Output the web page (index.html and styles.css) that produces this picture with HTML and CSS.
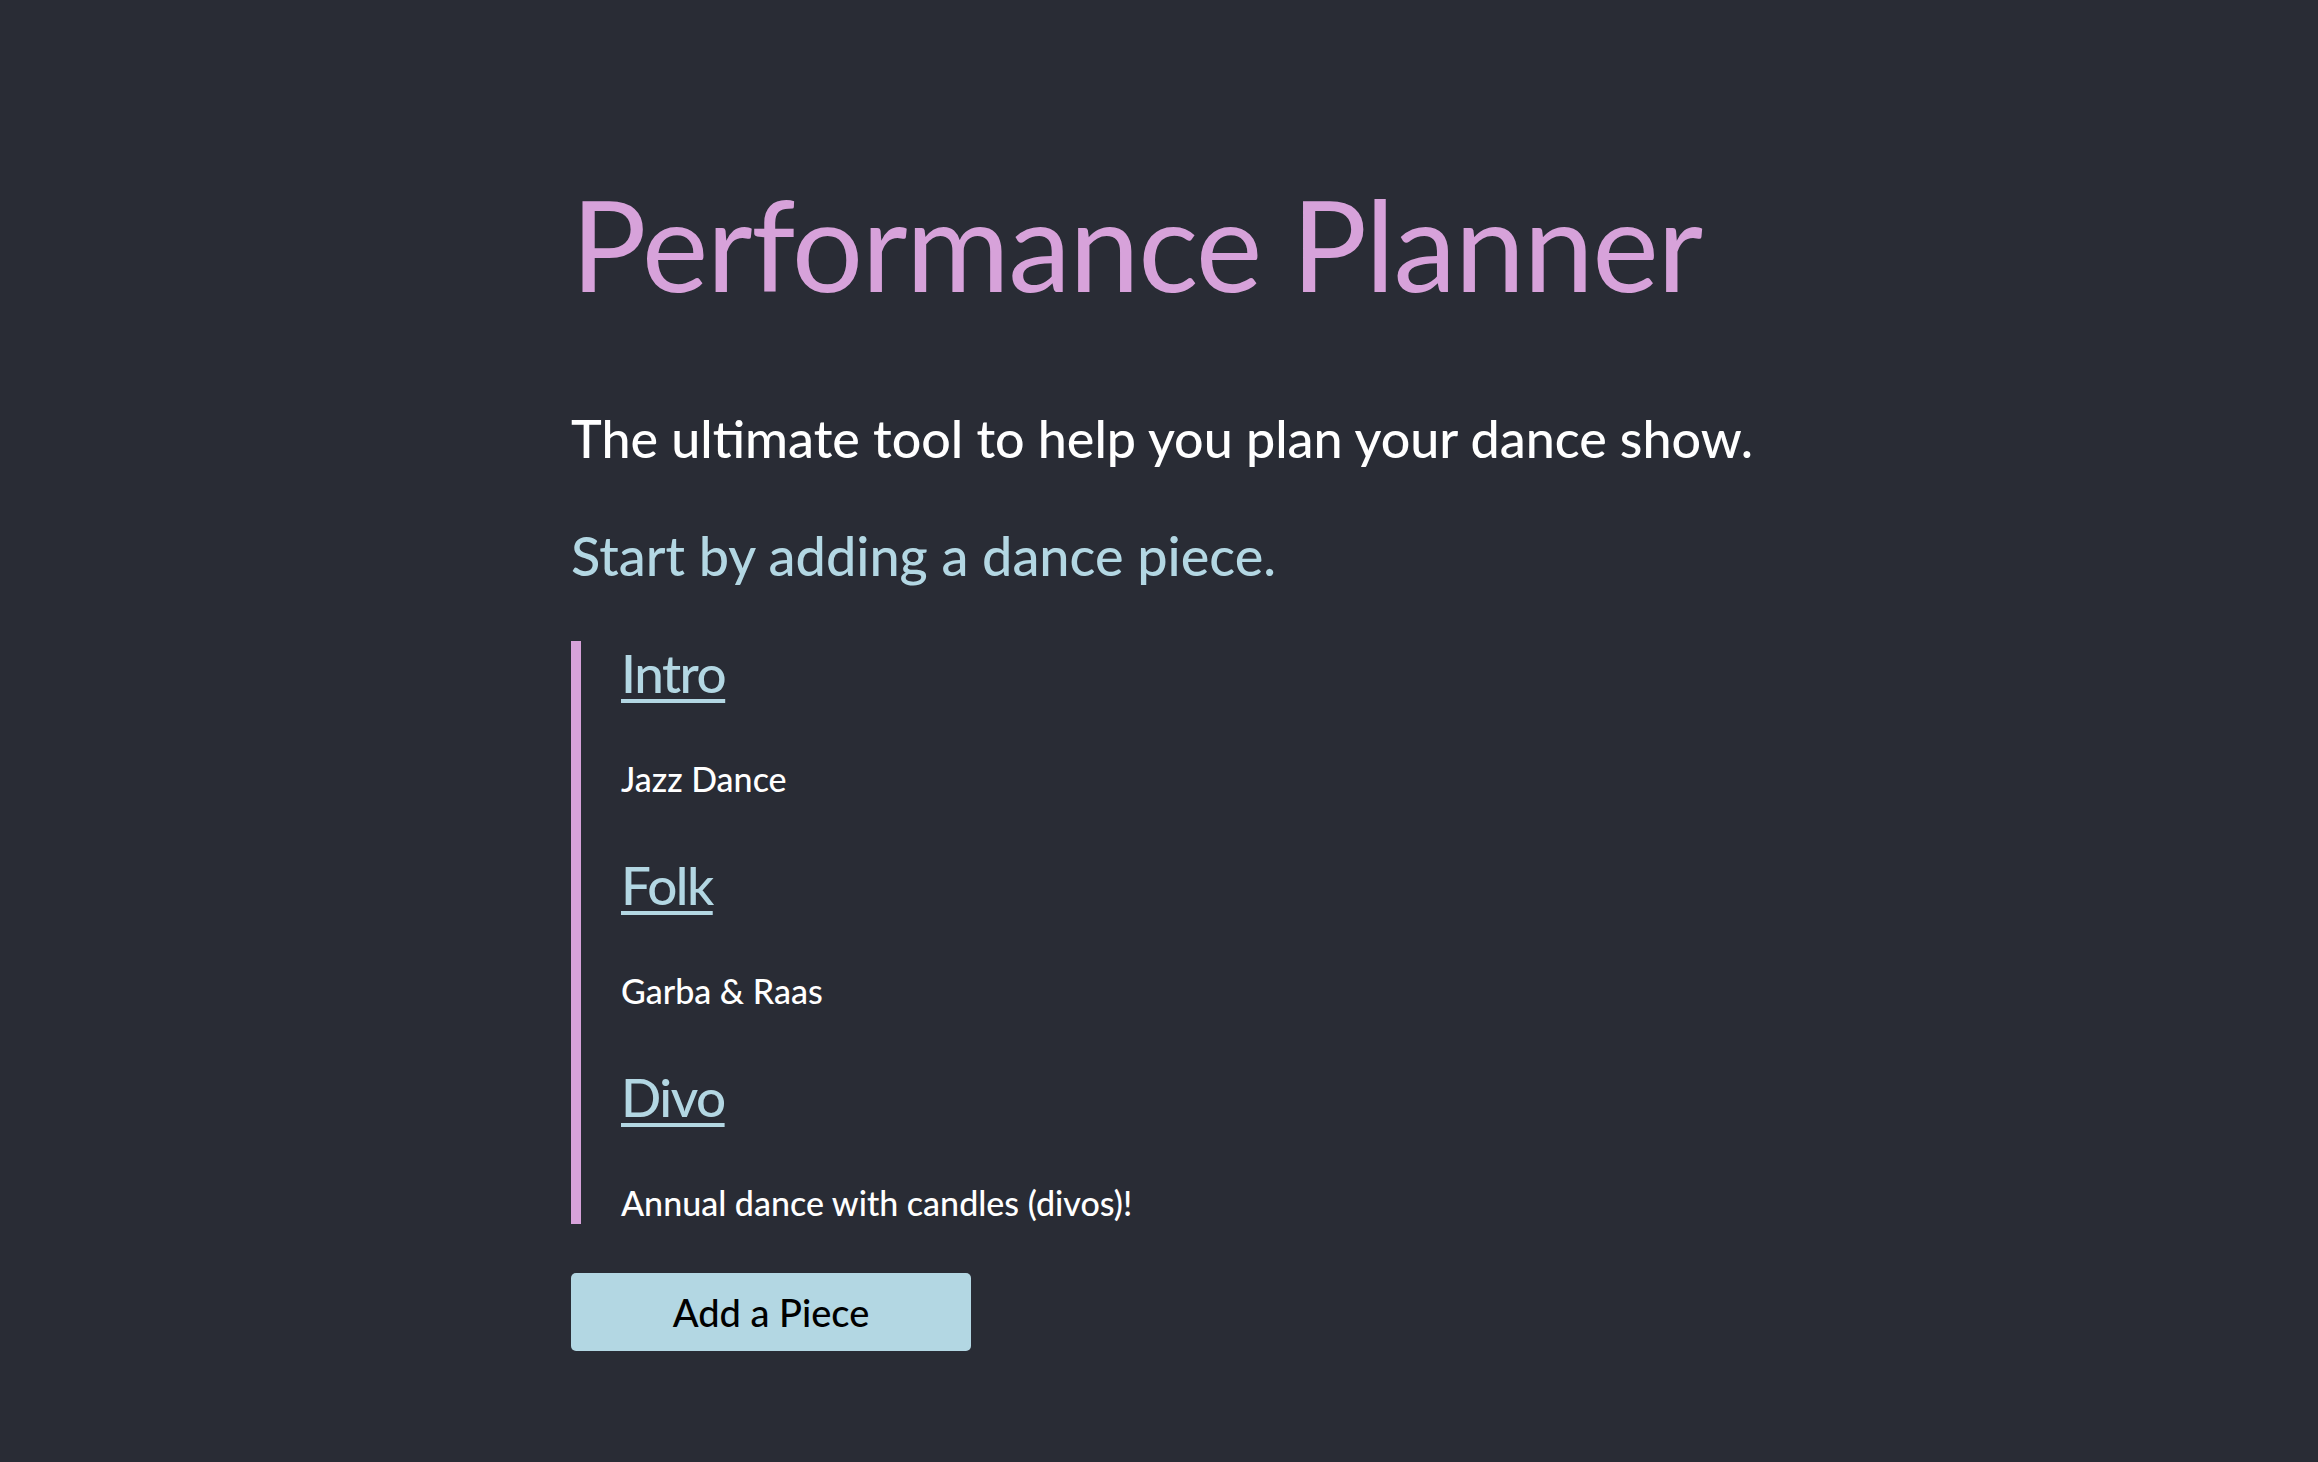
FILE: index.html
```html
<!DOCTYPE html>
<html lang="en">
<head>
<meta charset="utf-8">
<title>Performance Planner</title>
<link rel="stylesheet" href="styles.css">
</head>
<body>
<main class="page">
  <h1 class="title">Performance Planner</h1>
  <p class="tagline">The ultimate tool to help you plan your dance show.</p>
  <p class="prompt">Start by adding a dance piece.</p>
  <section class="pieces">
    <article class="piece">
      <a class="piece-name" href="#">Intro</a>
      <p class="piece-desc">Jazz Dance</p>
    </article>
    <article class="piece">
      <a class="piece-name" href="#">Folk</a>
      <p class="piece-desc">Garba &amp; Raas</p>
    </article>
    <article class="piece">
      <a class="piece-name" href="#">Divo</a>
      <p class="piece-desc">Annual dance with candles (divos)!</p>
    </article>
  </section>
  <button class="add-btn" type="button">Add a Piece</button>
</main>
</body>
</html>
```

FILE: styles.css
```css
html, body {
  margin: 0;
  padding: 0;
  background: #292c35;
  min-height: 100%;
}
body {
  font-family: "Lato", "Liberation Sans", sans-serif;
  color: #ffffff;
  min-height: 1462px;
}
.page {
  padding: 181px 0 0 571px;
  display: flex;
  flex-direction: column;
  align-items: flex-start;
}
.title {
  margin: 0;
  font-size: 126px;
  line-height: 1;
  font-weight: 400;
  letter-spacing: -1.5px;
  color: #d7a2da;
}
.tagline {
  margin: 105px 0 0;
  font-size: 52px;
  line-height: 1;
  font-weight: 500;
  color: #ffffff;
}
.prompt {
  margin: 65px 0 0;
  font-size: 54px;
  line-height: 1;
  font-weight: 500;
  color: #b3d7e3;
}
.pieces {
  margin-top: 58px;
  border-left: 10px solid #d7a2da;
  padding: 5px 0 4px 40px;
  display: flex;
  flex-direction: column;
}
.piece {
  display: flex;
  flex-direction: column;
  align-items: flex-start;
}
.piece + .piece {
  margin-top: 62px;
}
.piece-name {
  font-size: 53px;
  line-height: 1;
  font-weight: 500;
  letter-spacing: -1.5px;
  color: #b3d7e3;
  text-decoration: underline;
  text-decoration-thickness: 4px;
  text-underline-offset: 6px;
}
.piece-desc {
  margin: 63px 0 0;
  font-size: 34px;
  line-height: 1;
  font-weight: 500;
  color: #ffffff;
}
.add-btn {
  margin-top: 49px;
  width: 400px;
  height: 78px;
  border: none;
  border-radius: 5px;
  background: #b3d7e3;
  color: #000000;
  font-family: "Lato", "Liberation Sans", sans-serif;
  font-size: 38px;
  font-weight: 500;
  padding: 0;
}
```
